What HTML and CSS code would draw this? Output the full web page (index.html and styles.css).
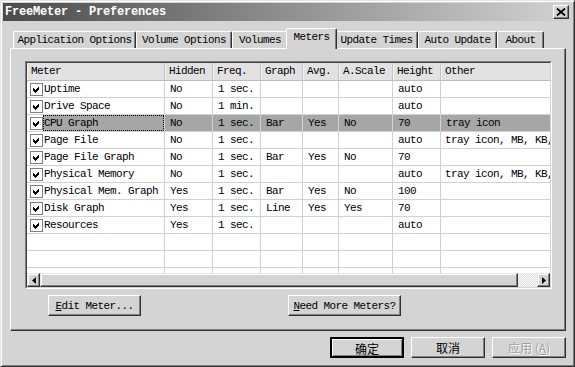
FILE: index.html
```html
<!DOCTYPE html>
<html lang="en">
<head>
    <meta charset="UTF-8">
    <title>FreeMeter - Preferences</title>
    <link rel="stylesheet" href="styles.css">
</head>
<body>
    <div class="window">
        <div class="titlebar">
            <span class="title">FreeMeter - Preferences</span>
            <span class="close-btn">
                <svg width="10" height="8" viewBox="0 0 10 8">
                    <path d="M1 0.5 L9 7.5 M9 0.5 L1 7.5" stroke="#000" stroke-width="1.8"/>
                </svg>
            </span>
        </div>

        <div class="tabs">
            <div class="tab tab-app">Application Options</div>
            <div class="tab tab-volopt">Volume Options</div>
            <div class="tab tab-volumes">Volumes</div>
            <div class="tab tab-meters selected">Meters</div>
            <div class="tab tab-update">Update Times</div>
            <div class="tab tab-auto">Auto Update</div>
            <div class="tab tab-about">About</div>
        </div>

        <div class="panel">
            <div class="list">
                <div class="list-inner">
                    <div class="list-body">
                        <div class="row header">
                            <div class="cell">Meter</div>
                            <div class="cell">Hidden</div>
                            <div class="cell">Freq.</div>
                            <div class="cell">Graph</div>
                            <div class="cell">Avg.</div>
                            <div class="cell">A.Scale</div>
                            <div class="cell">Height</div>
                            <div class="cell">Other</div>
                        </div>

                        <div class="row">
                            <div class="cell meter"><svg class="check" width="13" height="13" viewBox="0 0 13 13"><rect x="0.5" y="0.5" width="12" height="12" fill="#fff" stroke="#808080"/><path d="M3 5 L5 7 L9 3 L9 6 L5 10 L3 8 Z" fill="#000"/></svg><span class="label">Uptime</span></div>
                            <div class="cell">No</div>
                            <div class="cell">1 sec.</div>
                            <div class="cell"></div>
                            <div class="cell"></div>
                            <div class="cell"></div>
                            <div class="cell">auto</div>
                            <div class="cell"></div>
                        </div>
                        <div class="row">
                            <div class="cell meter"><svg class="check" width="13" height="13" viewBox="0 0 13 13"><rect x="0.5" y="0.5" width="12" height="12" fill="#fff" stroke="#808080"/><path d="M3 5 L5 7 L9 3 L9 6 L5 10 L3 8 Z" fill="#000"/></svg><span class="label">Drive Space</span></div>
                            <div class="cell">No</div>
                            <div class="cell">1 min.</div>
                            <div class="cell"></div>
                            <div class="cell"></div>
                            <div class="cell"></div>
                            <div class="cell">auto</div>
                            <div class="cell"></div>
                        </div>
                        <div class="row selected">
                            <div class="cell meter"><svg class="check" width="13" height="13" viewBox="0 0 13 13"><rect x="0.5" y="0.5" width="12" height="12" fill="#fff" stroke="#808080"/><path d="M3 5 L5 7 L9 3 L9 6 L5 10 L3 8 Z" fill="#000"/></svg><span class="label">CPU Graph</span></div>
                            <div class="cell">No</div>
                            <div class="cell">1 sec.</div>
                            <div class="cell">Bar</div>
                            <div class="cell">Yes</div>
                            <div class="cell">No</div>
                            <div class="cell">70</div>
                            <div class="cell">tray icon</div>
                        </div>
                        <div class="row">
                            <div class="cell meter"><svg class="check" width="13" height="13" viewBox="0 0 13 13"><rect x="0.5" y="0.5" width="12" height="12" fill="#fff" stroke="#808080"/><path d="M3 5 L5 7 L9 3 L9 6 L5 10 L3 8 Z" fill="#000"/></svg><span class="label">Page File</span></div>
                            <div class="cell">No</div>
                            <div class="cell">1 sec.</div>
                            <div class="cell"></div>
                            <div class="cell"></div>
                            <div class="cell"></div>
                            <div class="cell">auto</div>
                            <div class="cell other">tray icon, MB, KB,</div>
                        </div>
                        <div class="row">
                            <div class="cell meter"><svg class="check" width="13" height="13" viewBox="0 0 13 13"><rect x="0.5" y="0.5" width="12" height="12" fill="#fff" stroke="#808080"/><path d="M3 5 L5 7 L9 3 L9 6 L5 10 L3 8 Z" fill="#000"/></svg><span class="label">Page File Graph</span></div>
                            <div class="cell">No</div>
                            <div class="cell">1 sec.</div>
                            <div class="cell">Bar</div>
                            <div class="cell">Yes</div>
                            <div class="cell">No</div>
                            <div class="cell">70</div>
                            <div class="cell"></div>
                        </div>
                        <div class="row">
                            <div class="cell meter"><svg class="check" width="13" height="13" viewBox="0 0 13 13"><rect x="0.5" y="0.5" width="12" height="12" fill="#fff" stroke="#808080"/><path d="M3 5 L5 7 L9 3 L9 6 L5 10 L3 8 Z" fill="#000"/></svg><span class="label">Physical Memory</span></div>
                            <div class="cell">No</div>
                            <div class="cell">1 sec.</div>
                            <div class="cell"></div>
                            <div class="cell"></div>
                            <div class="cell"></div>
                            <div class="cell">auto</div>
                            <div class="cell other">tray icon, MB, KB,</div>
                        </div>
                        <div class="row">
                            <div class="cell meter"><svg class="check" width="13" height="13" viewBox="0 0 13 13"><rect x="0.5" y="0.5" width="12" height="12" fill="#fff" stroke="#808080"/><path d="M3 5 L5 7 L9 3 L9 6 L5 10 L3 8 Z" fill="#000"/></svg><span class="label">Physical Mem. Graph</span></div>
                            <div class="cell">Yes</div>
                            <div class="cell">1 sec.</div>
                            <div class="cell">Bar</div>
                            <div class="cell">Yes</div>
                            <div class="cell">No</div>
                            <div class="cell">100</div>
                            <div class="cell"></div>
                        </div>
                        <div class="row">
                            <div class="cell meter"><svg class="check" width="13" height="13" viewBox="0 0 13 13"><rect x="0.5" y="0.5" width="12" height="12" fill="#fff" stroke="#808080"/><path d="M3 5 L5 7 L9 3 L9 6 L5 10 L3 8 Z" fill="#000"/></svg><span class="label">Disk Graph</span></div>
                            <div class="cell">Yes</div>
                            <div class="cell">1 sec.</div>
                            <div class="cell">Line</div>
                            <div class="cell">Yes</div>
                            <div class="cell">Yes</div>
                            <div class="cell">70</div>
                            <div class="cell"></div>
                        </div>
                        <div class="row">
                            <div class="cell meter"><svg class="check" width="13" height="13" viewBox="0 0 13 13"><rect x="0.5" y="0.5" width="12" height="12" fill="#fff" stroke="#808080"/><path d="M3 5 L5 7 L9 3 L9 6 L5 10 L3 8 Z" fill="#000"/></svg><span class="label">Resources</span></div>
                            <div class="cell">Yes</div>
                            <div class="cell">1 sec.</div>
                            <div class="cell"></div>
                            <div class="cell"></div>
                            <div class="cell"></div>
                            <div class="cell">auto</div>
                            <div class="cell"></div>
                        </div>
                        <!-- пустые строки -->
                        <div class="row empty">
                            <div class="cell"></div><div class="cell"></div><div class="cell"></div><div class="cell"></div>
                            <div class="cell"></div><div class="cell"></div><div class="cell"></div><div class="cell"></div>
                        </div>
                        <div class="row empty">
                            <div class="cell"></div><div class="cell"></div><div class="cell"></div><div class="cell"></div>
                            <div class="cell"></div><div class="cell"></div><div class="cell"></div><div class="cell"></div>
                        </div>
                        <div class="row empty">
                            <div class="cell"></div><div class="cell"></div><div class="cell"></div><div class="cell"></div>
                            <div class="cell"></div><div class="cell"></div><div class="cell"></div><div class="cell"></div>
                        </div>
                    </div>

                    <div class="hscroll">
                        <div class="sb-btn">
                            <svg width="4" height="7" viewBox="0 0 4 7"><path d="M4 0 L0 3.5 L4 7 Z" fill="#000"/></svg>
                        </div>
                        <div class="sb-thumb"></div>
                        <div class="sb-track"></div>
                        <div class="sb-btn">
                            <svg width="4" height="7" viewBox="0 0 4 7"><path d="M0 0 L4 3.5 L0 7 Z" fill="#000"/></svg>
                        </div>
                    </div>
                </div>
            </div>

            <div class="panel-buttons">
                <button class="btn btn-edit"><u>E</u>dit Meter...</button>
                <button class="btn btn-more"><u>N</u>eed More Meters?</button>
            </div>
        </div>

        <div class="dialog-buttons">
            <button class="btn btn-dlg btn-default">确定</button>
            <button class="btn btn-dlg">取消</button>
            <button class="btn btn-dlg disabled">应用 (<u>A</u>)</button>
        </div>
    </div>
</body>
</html>
```

FILE: styles.css
```css
* {
    box-sizing: border-box;
}
body {
    margin: 0;
    background: #d4d4d4;
    font-family: 'Liberation Mono', 'DejaVu Sans Mono', monospace;
    font-size: 11px;
    letter-spacing: -0.6px;
    color: #000;
    overflow: hidden;
}
.window {
    width: 575px;
    height: 367px;
    padding: 2px;
    border: 1px solid;
    border-color: #e4e4e4 #303030 #303030 #e4e4e4;
    box-shadow: inset 1px 1px #fff, inset -1px -1px #808080;
    display: flex;
    flex-direction: column;
    overflow: hidden;
}
.titlebar {
    height: 18px;
    flex-shrink: 0;
    display: flex;
    align-items: center;
    justify-content: space-between;
    padding: 0 3px 0 2px;
    background: linear-gradient(to right, #4a4a4a 0%, #828282 40%, #d2d2d2 100%);
}
.title {
    color: #fff;
    font-weight: bold;
    font-size: 12px;
    letter-spacing: -0.2px;
}
.close-btn {
    width: 16px;
    height: 14px;
    display: flex;
    align-items: center;
    justify-content: center;
    background: #d4d4d4;
    border: 1px solid;
    border-color: #fff #303030 #303030 #fff;
    box-shadow: inset -1px -1px #808080;
}

/* Вкладки */
.tabs {
    height: 27px;
    flex-shrink: 0;
    display: flex;
    align-items: flex-end;
    padding-left: 10px;
}
.tab {
    height: 17px;
    line-height: 16px;
    text-align: center;
    white-space: nowrap;
    background: #d4d4d4;
    border-top: 1px solid #fff;
    border-left: 1px solid #fff;
    border-right: 1px solid #303030;
    box-shadow: inset -1px 0 #808080;
    border-radius: 2px 2px 0 0;
}
.tab-app { width: 123px; }
.tab-volopt { width: 96px; }
.tab-volumes { width: 56px; }
.tab-update { width: 83px; }
.tab-auto { width: 79px; }
.tab-about { width: 47px; }
.tab.selected {
    width: 51px;
    height: 21px;
    margin: 0 -2px -1px;
    padding-bottom: 4px;
    position: relative;
    z-index: 1;
}

/* Панель */
.panel {
    width: 556px;
    height: 283px;
    flex-shrink: 0;
    margin-left: 7px;
    padding: 12px 0 0 14px;
    border: 1px solid;
    border-color: #fff #303030 #303030 #fff;
    box-shadow: inset -1px -1px #808080;
}
.list {
    width: 527px;
    height: 228px;
    border: 1px solid;
    border-color: #808080 #fff #fff #808080;
}
.list-inner {
    height: 100%;
    border: 1px solid;
    border-color: #404040 #d4d4d4 #d4d4d4 #404040;
    background: #fff;
    display: flex;
    flex-direction: column;
}
.list-body {
    flex: 1;
    overflow: hidden;
}
.row {
    display: grid;
    grid-template-columns: 138px 48px 48px 42px 36px 54px 48px 150px;
    height: 17px;
}
.cell {
    border-right: 1px solid #d2d2d2;
    border-bottom: 1px solid #d2d2d2;
    padding-left: 5px;
    line-height: 16px;
    white-space: nowrap;
    overflow: hidden;
}
.cell.other {
    padding-left: 4px;
}
.row.header {
    height: 18px;
}
.row.header .cell {
    background: #e2e2e2;
    line-height: 17px;
    padding-left: 4px;
    border-right-color: #c4c4c4;
    border-bottom-color: #bdbdbd;
    box-shadow: inset 1px 0 #f4f4f4;
}
.cell.meter {
    display: flex;
    align-items: center;
    padding-left: 3px;
}
.check {
    flex-shrink: 0;
    display: block;
    shape-rendering: crispEdges;
}
.label {
    flex: 1;
    height: 16px;
    padding-left: 1px;
}
.row.selected .cell {
    background: #a6a6a6;
}
.row.selected .cell.meter {
    background: #fff;
}
.row.selected .label {
    background: #a6a6a6;
    outline: 1px dotted #000;
    outline-offset: -1px;
}

/* Горизонтальная прокрутка */
.hscroll {
    height: 14px;
    flex-shrink: 0;
    display: flex;
}
.sb-btn {
    width: 13px;
    display: flex;
    align-items: center;
    justify-content: center;
    background: #d4d4d4;
    border: 1px solid;
    border-color: #e8e8e8 #303030 #303030 #e8e8e8;
    box-shadow: inset -1px -1px #808080, inset 1px 1px #fff;
}
.sb-thumb {
    flex: 1;
    background: #d4d4d4;
    border: 1px solid;
    border-color: #e8e8e8 #303030 #303030 #e8e8e8;
    box-shadow: inset -1px -1px #808080, inset 1px 1px #fff;
}
.sb-track {
    width: 19px;
    background: repeating-conic-gradient(#fff 0 25%, #dcdcdc 0 50%) 0 0 / 2px 2px;
}

/* Кнопки */
.btn {
    height: 21px;
    padding: 0;
    font-family: inherit;
    font-size: 11px;
    letter-spacing: -0.6px;
    color: #000;
    background: #d4d4d4;
    border: 1px solid;
    border-color: #fff #303030 #303030 #fff;
    box-shadow: inset -1px -1px #808080;
}
.panel-buttons {
    display: flex;
    margin-top: 6px;
    padding-left: 23px;
}
.btn-edit {
    width: 93px;
}
.btn-more {
    width: 113px;
    margin-left: 147px;
}
.dialog-buttons {
    display: flex;
    justify-content: flex-end;
    gap: 7px;
    margin-top: 6px;
    padding-right: 6px;
}
.btn-dlg {
    width: 74px;
    font-family: 'Noto Sans CJK SC', sans-serif;
    font-size: 12px;
    letter-spacing: 0;
    line-height: 19px;
}
.btn-default {
    border: 2px solid #000;
    box-shadow: inset 1px 1px #fff, inset -1px -1px #808080;
}
.btn-dlg.disabled {
    color: #a0a0a0;
    text-shadow: 1px 1px #fff;
}
```
